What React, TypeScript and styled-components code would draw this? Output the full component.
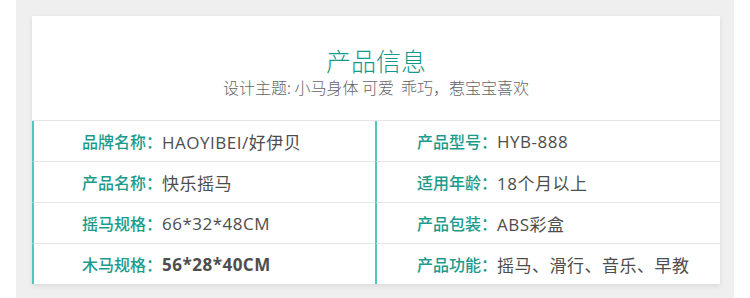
import React from "react";
import styled, {createGlobalStyle} from "styled-components";

const GlobalStyle = createGlobalStyle`
    body {
        margin: 0;
        background: #ffffff;
        font-family: "Noto Sans CJK SC", "Noto Sans", sans-serif;
    }
`;

const Frame = styled.div`
    margin: 0 16px;
    width: 718px;
    height: 298px;
    box-sizing: border-box;
    padding: 16px 14px 0 16px;
    background: #efefef;
`;

const Card = styled.div`
    background: #ffffff;
    box-shadow: 0 2px 5px rgba(0, 0, 0, 0.09);
`;

const Header = styled.div`
    display: flex;
    flex-direction: column;
    align-items: center;
    padding-top: 29px;
    padding-bottom: 22px;
`;

const Title = styled.div`
    font-size: 25px;
    line-height: 31px;
    font-weight: 300;
    color: #16998b;
`;

const Subtitle = styled.div`
    margin-top: 1px;
    font-size: 16px;
    line-height: 21px;
    font-weight: 300;
    color: #666666;
    white-space: pre;
`;

const Table = styled.div`
    display: grid;
    grid-template-columns: 343px 1fr;
    border-top: 1px solid #e6e6e6;
`;

const Cell = styled.div<{$right?: boolean; $last?: boolean}>`
    display: flex;
    align-items: center;
    box-sizing: border-box;
    padding-left: ${p => (p.$right ? 40 : 48)}px;
    border-left: 2px solid #4ec8bc;
    border-bottom: ${p => (p.$last ? "none" : "1px solid #e6e6e6")};
    height: ${p => (p.$last ? 40 : 41)}px;
`;

const Label = styled.span`
    font-size: 16px;
    font-weight: 500;
    color: #1a9b8c;
    white-space: nowrap;
`;

const Value = styled.span<{$bold?: boolean}>`
    font-family: "Open Sans", "Noto Sans CJK SC", sans-serif;
    font-size: 17px;
    letter-spacing: 0.5px;
    color: #4d4d4d;
    font-weight: ${p => (p.$bold ? 700 : 400)};
    white-space: nowrap;
`;

const rows: [string, string, string, string, boolean?][] = [
    ["品牌名称：", "HAOYIBEI/好伊贝", "产品型号：", "HYB-888"],
    ["产品名称：", "快乐摇马", "适用年龄：", "18个月以上"],
    ["摇马规格：", "66*32*48CM", "产品包装：", "ABS彩盒"],
    ["木马规格：", "56*28*40CM", "产品功能：", "摇马、滑行、音乐、早教", true],
];

const App = () => {
    return (
        <>
            <GlobalStyle/>
            <Frame>
                <Card>
                    <Header>
                        <Title>产品信息</Title>
                        <Subtitle>{"设计主题: 小马身体 可爱  乖巧，惹宝宝喜欢"}</Subtitle>
                    </Header>
                    <Table>
                        {rows.map((r, i) => {
                            const last = i === rows.length - 1;
                            return (
                                <React.Fragment key={i}>
                                    <Cell $last={last}>
                                        <Label>{r[0]}</Label>
                                        <Value $bold={r[4]}>{r[1]}</Value>
                                    </Cell>
                                    <Cell $right $last={last}>
                                        <Label>{r[2]}</Label>
                                        <Value>{r[3]}</Value>
                                    </Cell>
                                </React.Fragment>
                            );
                        })}
                    </Table>
                </Card>
            </Frame>
        </>
    );
};

export default App;
